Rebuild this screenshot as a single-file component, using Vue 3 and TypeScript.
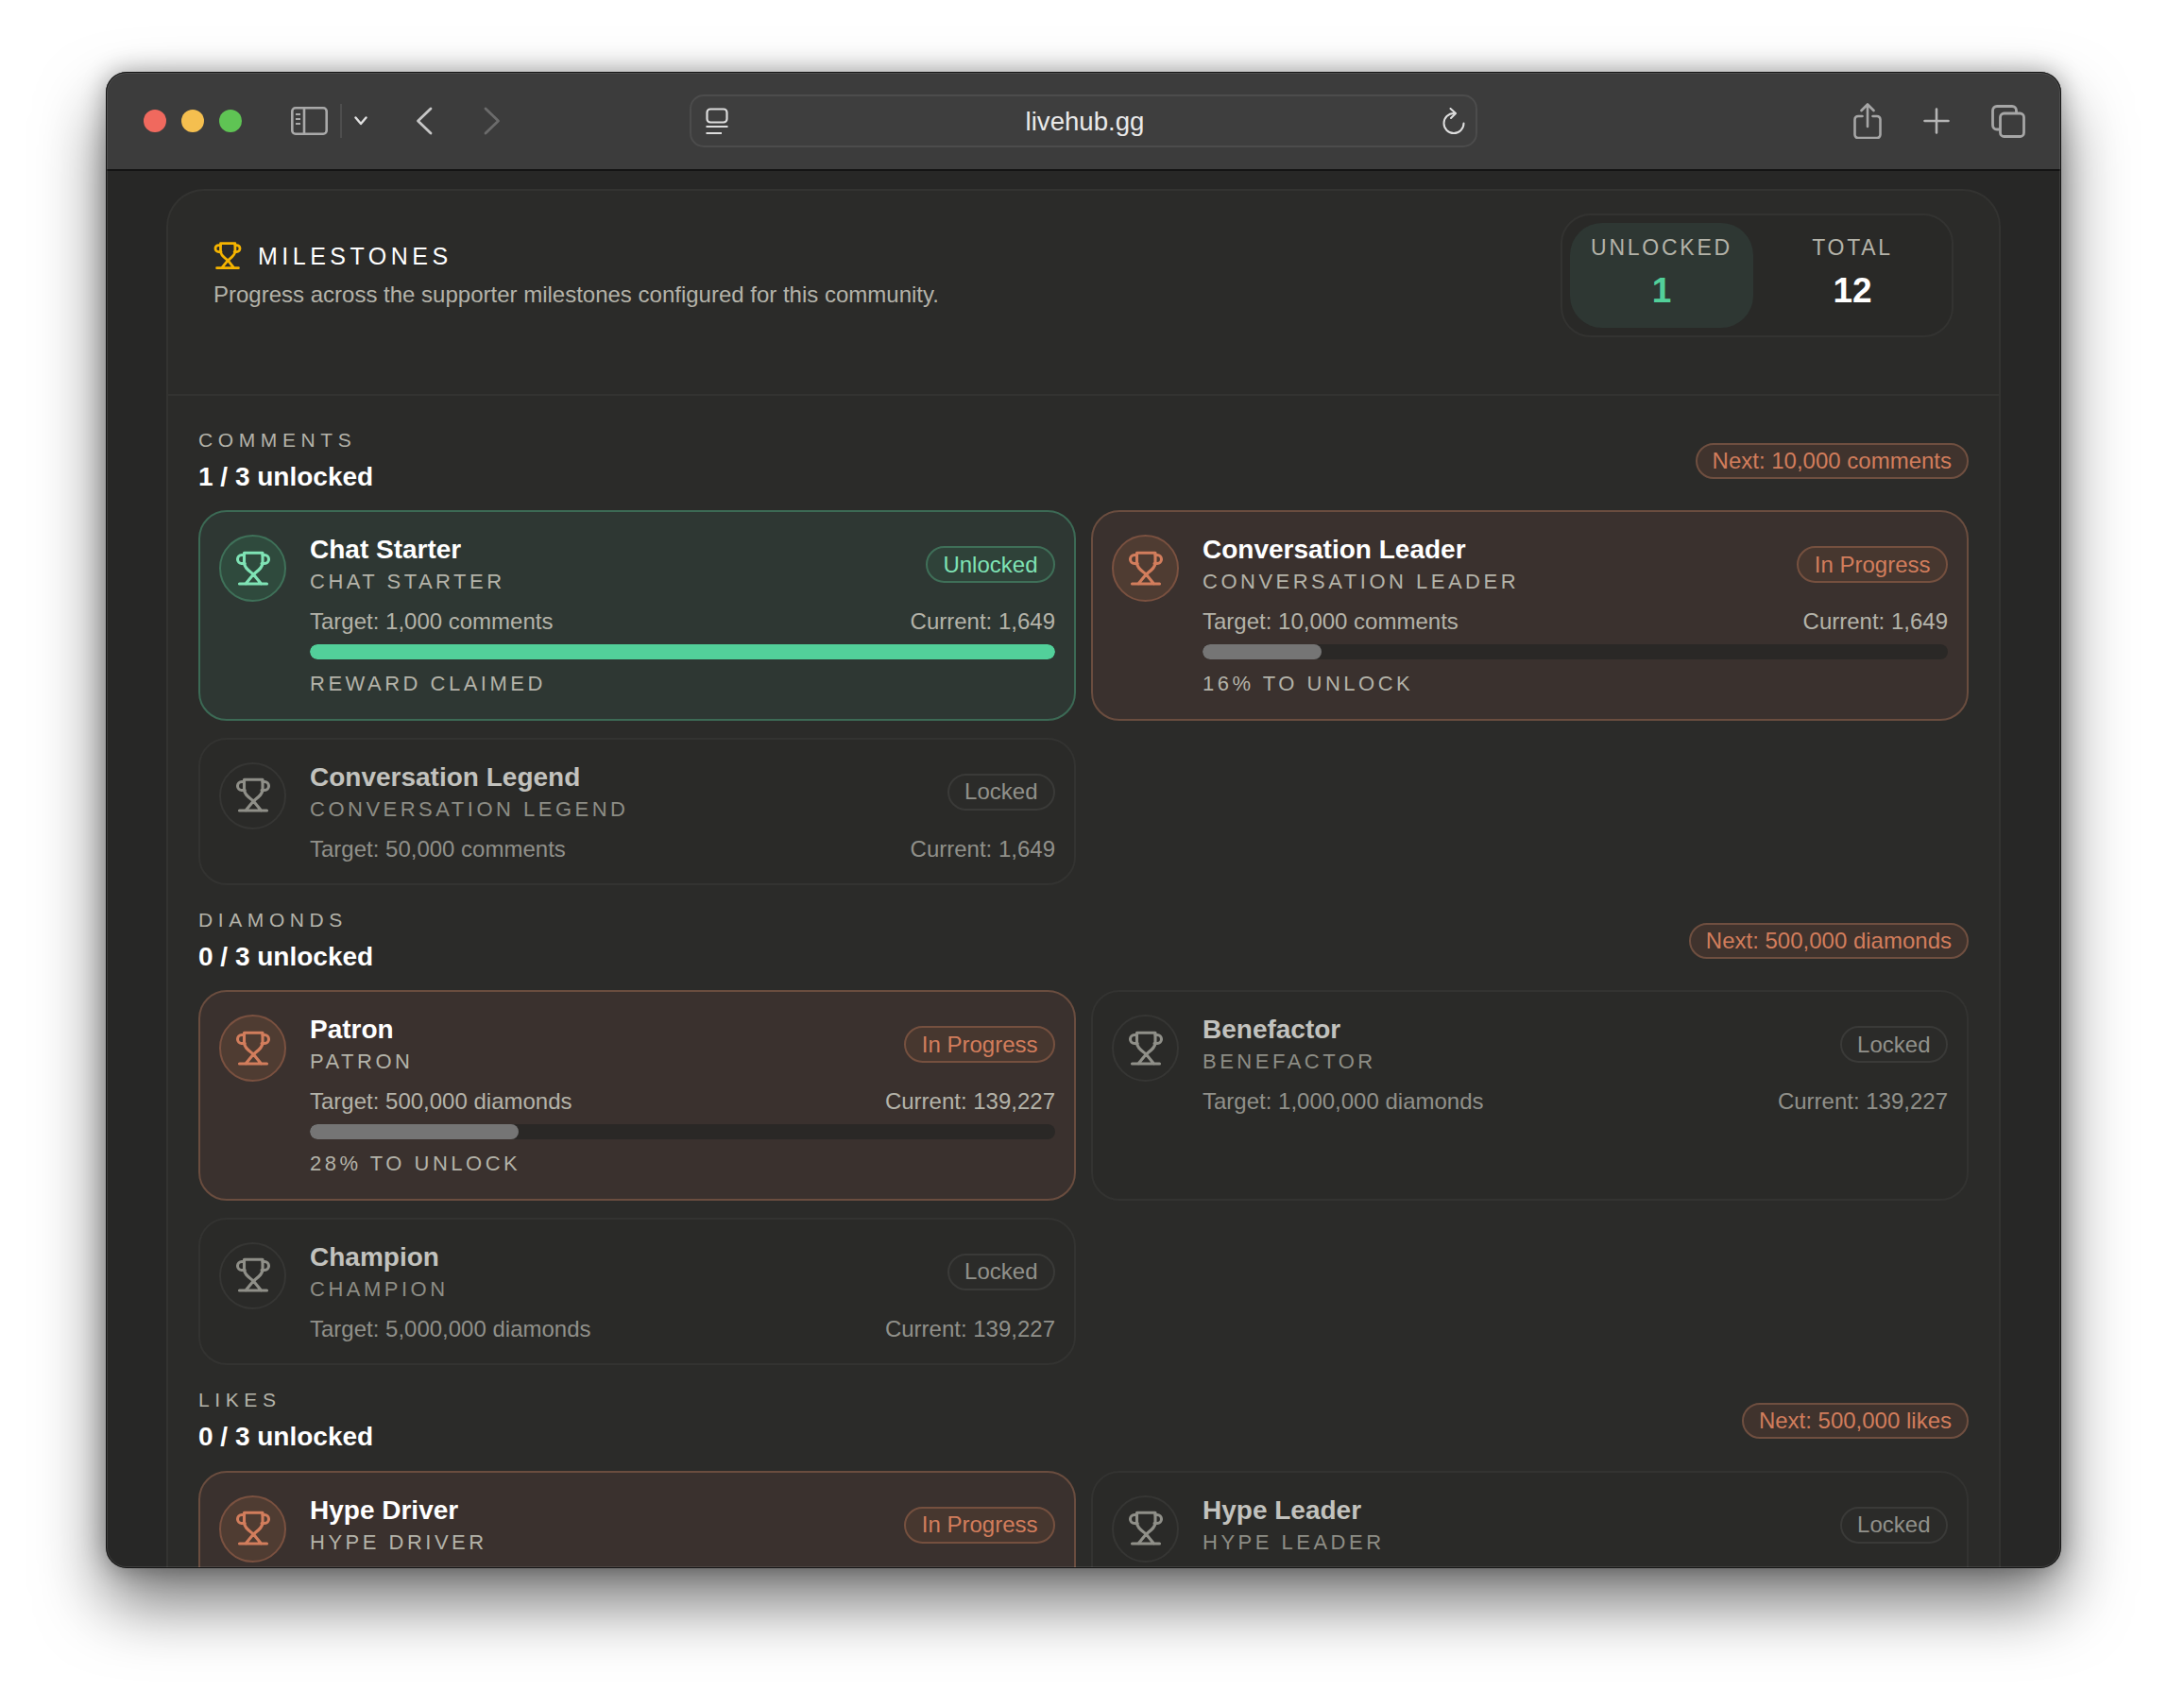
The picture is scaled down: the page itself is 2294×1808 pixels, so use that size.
<script setup lang="ts">
type State = 'unlocked' | 'progress' | 'locked'
interface Milestone {
  title: string
  target: string
  current: string
  state: State
  pct?: number
  note?: string
}
interface Section {
  label: string
  count: string
  next: string
  items: Milestone[]
}
const badge: Record<State, string> = { unlocked: 'Unlocked', progress: 'In Progress', locked: 'Locked' }
const sections: Section[] = [
  {
    label: 'COMMENTS', count: '1 / 3 unlocked', next: 'Next: 10,000 comments',
    items: [
      { title: 'Chat Starter', target: 'Target: 1,000 comments', current: 'Current: 1,649', state: 'unlocked', pct: 100, note: 'REWARD CLAIMED' },
      { title: 'Conversation Leader', target: 'Target: 10,000 comments', current: 'Current: 1,649', state: 'progress', pct: 16, note: '16% TO UNLOCK' },
      { title: 'Conversation Legend', target: 'Target: 50,000 comments', current: 'Current: 1,649', state: 'locked' },
    ],
  },
  {
    label: 'DIAMONDS', count: '0 / 3 unlocked', next: 'Next: 500,000 diamonds',
    items: [
      { title: 'Patron', target: 'Target: 500,000 diamonds', current: 'Current: 139,227', state: 'progress', pct: 28, note: '28% TO UNLOCK' },
      { title: 'Benefactor', target: 'Target: 1,000,000 diamonds', current: 'Current: 139,227', state: 'locked' },
      { title: 'Champion', target: 'Target: 5,000,000 diamonds', current: 'Current: 139,227', state: 'locked' },
    ],
  },
  {
    label: 'LIKES', count: '0 / 3 unlocked', next: 'Next: 500,000 likes',
    items: [
      { title: 'Hype Driver', target: 'Target: 500,000 likes', current: 'Current: 139,227', state: 'progress', pct: 28, note: '28% TO UNLOCK' },
      { title: 'Hype Leader', target: 'Target: 1,000,000 likes', current: 'Current: 139,227', state: 'locked' },
    ],
  },
]
</script>

<template>
  <div class="page">
    <div class="window">
      <header class="toolbar">
        <span class="light red"></span>
        <span class="light yellow"></span>
        <span class="light green"></span>
        <svg class="tb-sidebar" width="39" height="30" viewBox="0 0 39 30" fill="none" stroke="#a9a9a9" stroke-width="2.6">
          <rect x="1.3" y="1.3" width="36.4" height="27.4" rx="3.5" />
          <path d="M14 1.5V28.5" />
          <path d="M5 8h5M5 13h5M5 18h5" stroke-width="2" />
        </svg>
        <span class="tb-divider"></span>
        <svg class="tb-chevron" width="14" height="10" viewBox="0 0 14 10" fill="none" stroke="#e0e0e0" stroke-width="2.4" stroke-linecap="round" stroke-linejoin="round">
          <path d="M1.5 1.5 7 8l5.5-6.5" />
        </svg>
        <svg class="tb-back" width="18" height="30" viewBox="0 0 18 30" fill="none" stroke="#c6c6c6" stroke-width="2.8" stroke-linecap="round" stroke-linejoin="round">
          <path d="M16 2 2.5 15 16 28" />
        </svg>
        <svg class="tb-forward" width="18" height="30" viewBox="0 0 18 30" fill="none" stroke="#6b6b6b" stroke-width="2.8" stroke-linecap="round" stroke-linejoin="round">
          <path d="M2 2 15.5 15 2 28" />
        </svg>
        <div class="urlbar">
          <svg width="24" height="28" viewBox="0 0 24 28" fill="none" stroke="#dcdcdc" stroke-width="2.2">
            <rect x="1.5" y="1.5" width="21" height="14" rx="3.5" />
            <path d="M.5 20H23.5M.5 27H17" />
          </svg>
          <span class="url">livehub.gg</span>
          <svg width="26" height="28" viewBox="0 0 26 28" fill="none" stroke="#dedede" stroke-width="2" stroke-linecap="round" stroke-linejoin="round">
            <path d="M13 6A10.5 10.5 0 1 0 23.5 16.5" />
            <path d="M9.5 1 15 6l-5 5" />
          </svg>
        </div>
        <svg class="tb-share" width="30" height="38" viewBox="0 0 30 38" fill="none" stroke="#a6a6a6" stroke-width="2.6" stroke-linecap="round" stroke-linejoin="round">
          <path d="M9.5 14H5a3.5 3.5 0 0 0-3.5 3.5v16A3.5 3.5 0 0 0 5 37h20a3.5 3.5 0 0 0 3.5-3.5v-16A3.500 3.500 0 0 0 25 14h-4.500" />
          <path d="M15 25V2M8.500 8 15 1.500 21.500 8" />
        </svg>
        <svg class="tb-plus" width="28" height="28" viewBox="0 0 28 28" fill="none" stroke="#b5b5b5" stroke-width="2.6" stroke-linecap="round">
          <path d="M14 1.500V26.500M1.500 14H26.500" />
        </svg>
        <svg class="tb-tabs" width="36" height="35" viewBox="0 0 36 35" fill="none" stroke="#a6a6a6" stroke-width="2.8">
          <rect x="9.500" y="9" width="25" height="24.500" rx="4" />
          <path d="M9.500 26H6a4.500 4.500 0 0 1-4.500-4.500V6A4.500 4.500 0 0 1 6 1.500h16A4.500 4.500 0 0 1 26.500 6v3" />
        </svg>
      </header>

      <main class="content">
        <section class="panel">
          <div class="panel-head">
            <div class="intro">
              <div class="intro-title">
                <svg class="trophy-main" width="30" height="30" viewBox="0 0 38 38" fill="none" stroke="#f5b400" stroke-width="3.500" stroke-linejoin="round" stroke-linecap="round">
                  <path d="M9.500 2.200H29V13C29 18 24 21 19.300 25 14.500 21 9.500 18 9.500 13Z" />
                  <path d="M19.300 25 27.500 35M19.300 25 11 35M4.500 35H33.500" />
                  <path d="M9.500 4.500H7a4.500 4.500 0 0 0 0 9h3.200M29 4.500h2a4.500 4.500 0 0 1 0 9h-3" />
                </svg>
                <span>MILESTONES</span>
              </div>
              <p class="intro-desc">Progress across the supporter milestones configured for this community.</p>
            </div>
            <div class="stats">
              <div class="stat stat-on">
                <span class="stat-label">UNLOCKED</span>
                <span class="stat-value green-text">1</span>
              </div>
              <div class="stat">
                <span class="stat-label">TOTAL</span>
                <span class="stat-value">12</span>
              </div>
            </div>
          </div>

          <div class="panel-body">
            <div v-for="s in sections" :key="s.label" class="group">
              <div class="group-head">
                <div class="group-text">
                  <div class="group-label">{{ s.label }}</div>
                  <div class="group-count">{{ s.count }}</div>
                </div>
                <span class="next">{{ s.next }}</span>
              </div>
              <div class="grid">
                <article v-for="m in s.items" :key="m.title" class="card" :class="m.state">
                  <div class="disc">
                    <svg width="38" height="38" viewBox="0 0 38 38" fill="none" stroke="currentColor" stroke-width="3.100" stroke-linejoin="round" stroke-linecap="round">
                      <path d="M9.500 2.200H29V13C29 18 24 21 19.300 25 14.500 21 9.500 18 9.500 13Z" />
                      <path d="M19.300 25 27.500 35M19.300 25 11 35M4.500 35H33.500" />
                      <path d="M9.500 4.500H7a4.500 4.500 0 0 0 0 9h3.200M29 4.500h2a4.500 4.500 0 0 1 0 9h-3" />
                    </svg>
                  </div>
                  <div class="card-main">
                    <div class="card-top">
                      <div>
                        <div class="card-title">{{ m.title }}</div>
                        <div class="card-sub">{{ m.title.toUpperCase() }}</div>
                      </div>
                      <span class="badge">{{ badge[m.state] }}</span>
                    </div>
                    <div class="card-row">
                      <span>{{ m.target }}</span>
                      <span>{{ m.current }}</span>
                    </div>
                    <template v-if="m.pct">
                      <div class="track">
                        <div class="fill" :style="{ width: m.pct + '%' }"></div>
                      </div>
                      <div class="note">{{ m.note }}</div>
                    </template>
                  </div>
                </article>
              </div>
            </div>
          </div>
        </section>
      </main>
    </div>
  </div>
</template>

<style>
html, body { margin: 0; background: #fff; }
</style>

<style scoped>
.page {
  width: 2294px;
  height: 1808px;
  padding: 76px 112px 148px;
  box-sizing: border-box;
  overflow: hidden;
  font-family: "Liberation Sans", Arial, sans-serif;
  background: #fff;
}
.window {
  position: relative;
  width: 2070px;
  height: 1584px;
  border-radius: 22px;
  overflow: hidden;
  display: flex;
  flex-direction: column;
  background: #272726;
  box-shadow: 0 36px 70px rgba(0, 0, 0, 0.55), 0 0 26px rgba(0, 0, 0, 0.32);
}
.window::after {
  content: "";
  position: absolute;
  inset: 0;
  border-radius: inherit;
  box-shadow: inset 0 0 0 1px #141414, inset 0 0 0 2px rgba(255, 255, 255, 0.1);
  pointer-events: none;
}
.toolbar {
  flex: 0 0 105px;
  box-sizing: border-box;
  display: flex;
  align-items: center;
  padding: 1px 0 0 40px;
  background: #3c3c3c;
  border-bottom: 2px solid #141414;
}
.light { width: 24px; height: 24px; border-radius: 50%; margin-right: 16px; }
.red { background: #f0695e; }
.yellow { background: #f5bf4f; }
.green { background: #5fc454; margin-right: 0; }
.tb-sidebar { margin-left: 52px; }
.tb-divider { width: 2px; height: 36px; background: #4e4e4e; margin-left: 13px; }
.tb-chevron { margin-left: 13px; }
.tb-back { margin-left: 51px; }
.tb-forward { margin-left: 54px; }
.urlbar {
  margin-left: 200px;
  width: 834px;
  height: 56px;
  box-sizing: border-box;
  border: 2px solid #4c4c4c;
  border-radius: 15px;
  background: #3e3e3e;
  display: flex;
  align-items: center;
  justify-content: space-between;
  padding: 0 10px 0 15px;
}
.url { color: #e9e9e9; font-size: 27.600px; padding-top: 2px; }
.tb-share { margin-left: 398px; }
.tb-plus { margin-left: 44px; }
.tb-tabs { margin-left: 44px; }

.content {
  flex: 1;
  min-height: 0;
  overflow: hidden;
  padding: 19px 64px 0 64px;
}
.panel {
  border: 2px solid #333331;
  border-bottom: 0;
  border-radius: 40px 40px 0 0;
  background: #2b2b29;
}
.panel-head {
  height: 217px;
  box-sizing: border-box;
  padding: 24px 48px 0 48px;
  display: flex;
  justify-content: space-between;
  align-items: flex-start;
  border-bottom: 2px solid #333331;
}
.intro { margin-top: 30px; }
.intro-title {
  display: flex;
  align-items: center;
  gap: 17px;
  color: #fff;
  font-size: 25px;
  letter-spacing: 4.500px;
  line-height: 30px;
}
.intro-desc {
  margin: 11px 0 0;
  font-size: 24px;
  line-height: 30px;
  color: #b4b3a9;
}
.stats {
  width: 416px;
  height: 131px;
  box-sizing: border-box;
  padding: 8px;
  border: 2px solid #333331;
  border-radius: 32px;
  background: #292927;
  display: grid;
  grid-template-columns: 1fr 1fr;
  gap: 8px;
}
.stat {
  border-radius: 34px;
  display: flex;
  flex-direction: column;
  align-items: center;
  padding-top: 12px;
}
.stat-on { background: #2e3733; }
.stat-label { font-size: 23px; letter-spacing: 2.750px; line-height: 28px; color: #b4b3a9; }
.stat-value { font-size: 37px; font-weight: 700; line-height: 46px; margin-top: 8.500px; color: #fff; }
.green-text { color: #52d09a; }

.panel-body {
  padding: 33.500px 32px 0;
  display: flex;
  flex-direction: column;
  gap: 24.300px;
}
.group-head {
  display: flex;
  justify-content: space-between;
  align-items: center;
  margin-bottom: 17.500px;
}
.group-label { font-size: 21px; letter-spacing: 5.600px; line-height: 26px; color: #b4b3a9; }
.group-count { font-size: 28px; font-weight: 700; line-height: 36px; margin-top: 8px; color: #fff; }
.next {
  height: 38px;
  box-sizing: border-box;
  padding: 0 16px;
  display: flex;
  align-items: center;
  border: 2px solid #6f4f40;
  border-radius: 19px;
  background: #40332d;
  color: #d27d5c;
  font-size: 24px;
}
.grid {
  display: grid;
  grid-template-columns: 1fr 1fr;
  gap: 17.500px 16px;
}
.card {
  box-sizing: border-box;
  border: 2px solid #333331;
  border-radius: 30px;
  padding: 24px 20px 21px;
  display: flex;
  gap: 25px;
}
.card.unlocked { background: #2e3733; border-color: #3c6a55; }
.card.progress { background: #3a312e; border-color: #6a4d3f; }
.card.locked { background: #2a2a28; }
.disc {
  flex: 0 0 71px;
  height: 71px;
  box-sizing: border-box;
  border: 2px solid;
  border-radius: 50%;
  display: flex;
  align-items: center;
  justify-content: center;
}
.unlocked .disc { color: #7fe3b5; background: #2f4a3d; border-color: #3f7159; }
.progress .disc { color: #d27d5c; background: #4f3c32; border-color: #7a5140; }
.locked .disc { color: #8f8f88; background: #2a2a28; border-color: #363634; }
.card-main { flex: 1; min-width: 0; }
.card-top { display: flex; justify-content: space-between; align-items: center; }
.card-title { font-size: 28px; font-weight: 700; line-height: 32px; color: #fff; }
.card-sub { font-size: 22px; letter-spacing: 3.500px; line-height: 26px; margin-top: 5px; color: #b4b3a9; }
.locked .card-title { color: #c2c2be; }
.locked .card-sub { color: #8d8d85; }
.badge {
  height: 39px;
  box-sizing: border-box;
  padding: 0 16.500px;
  display: flex;
  align-items: center;
  border: 2px solid;
  border-radius: 20px;
  font-size: 24px;
}
.unlocked .badge { color: #7fe3b5; background: #2f4239; border-color: #3f6f58; }
.progress .badge { color: #d27d5c; background: #47372f; border-color: #75503f; }
.locked .badge { color: #91918b; background: #2b2b29; border-color: #3a3a38; }
.card-row {
  display: flex;
  justify-content: space-between;
  margin-top: 14px;
  font-size: 24px;
  line-height: 30px;
  color: #b4b3a9;
}
.locked .card-row { color: #90908a; }
.track { height: 16px; margin-top: 9px; border-radius: 8px; background: #2a2826; overflow: hidden; }
.fill { height: 100%; border-radius: 8px; background: #757575; }
.unlocked .fill { background: #52d09a; }
.note {
  margin-top: 13px;
  padding-bottom: 3px;
  font-size: 22px;
  letter-spacing: 3.500px;
  line-height: 26px;
  color: #b4b3a9;
}
</style>
